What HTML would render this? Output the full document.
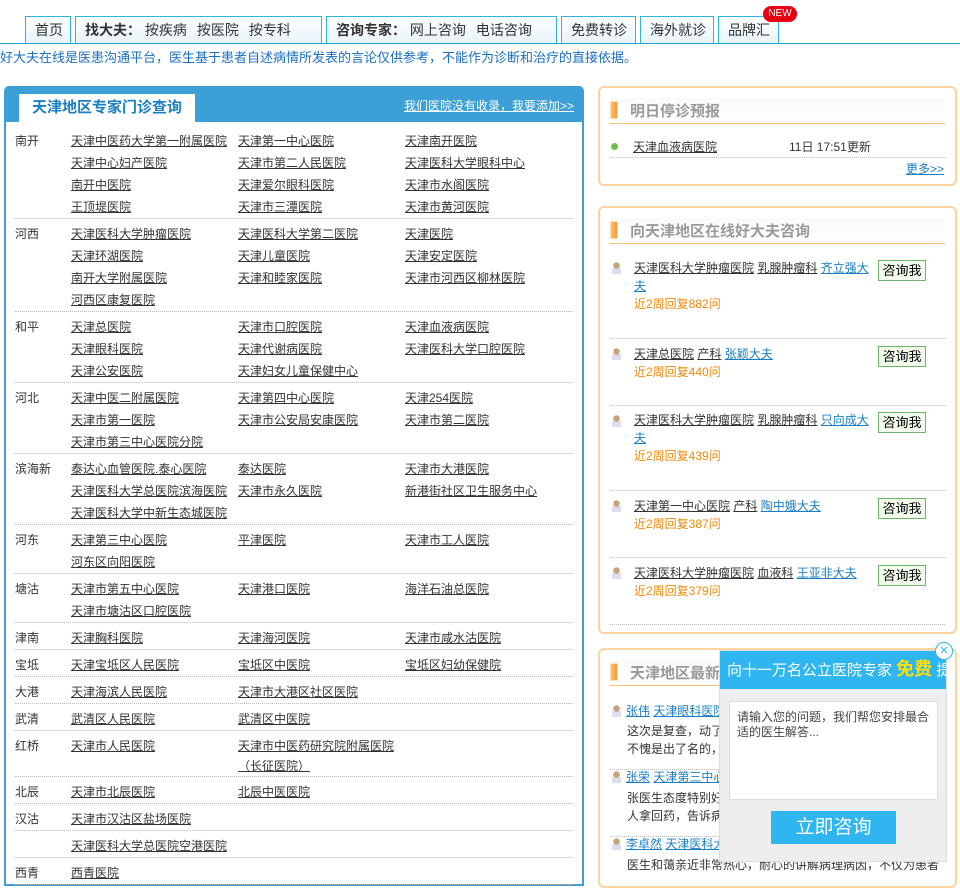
<!DOCTYPE html>
<html><head><meta charset="utf-8"><style>
*{margin:0;padding:0;box-sizing:border-box}
body{width:960px;height:873px;overflow:hidden;background:#fff;font-family:"Liberation Sans","Noto Sans CJK SC",sans-serif;font-size:12px;color:#333;position:relative}
a{color:#333;text-decoration:underline}
.abs{position:absolute}
.nav{position:absolute;top:16px;height:28px;border:1px solid #2fb4e0;border-bottom:none;background:linear-gradient(#fff,#e6f3fb);font-size:14px;line-height:27px;padding:0 9px;color:#333;white-space:nowrap}
.nav b{font-weight:bold}
.nav span{margin-left:10px}
.topline{position:absolute;top:43px;left:0;width:960px;height:1px;background:#2a9fd8}
.notice{position:absolute;top:48px;left:0;color:#1a6fc0;font-size:13px;line-height:20px;white-space:nowrap}
.lp{position:absolute;left:4px;top:86px;width:580px;height:800px;border:2px solid #3c9fd6;border-radius:5px 5px 0 0;background:#fff}
.lph{height:34px;background:#3c9fd6;position:relative}
.tab{position:absolute;left:13px;top:6px;width:176px;height:28px;background:#fff;color:#1a7ec4;font-size:15px;font-weight:bold;line-height:28px;text-align:center;white-space:nowrap}
.add{position:absolute;right:8px;top:9px;color:#fff;font-size:12px;text-decoration:underline}
.list{padding:4px 9px 0 9px}
.g{border-bottom:1px dotted #bbb;padding:4px 0 0;display:flex}
.g .l{width:56px;line-height:22px;color:#333}
.g .c{flex:1;display:grid;grid-template-columns:167px 167px 1fr}
.g .c a{line-height:22px;white-space:nowrap}
.box{position:absolute;left:598px;width:359px;border:2px solid #fdd3a0;border-radius:6px;background:#fff}
.bh{position:absolute;left:10px;top:10px;width:335px;height:26px;border-bottom:1px solid #fdbf6e;background:linear-gradient(#fafafa,#fff)}
.bh i{position:absolute;left:0;top:3px;width:8px;height:18px;background:linear-gradient(90deg,#fcbf77,#f59a2e);border:1px solid #fde0b8}
.bh span{position:absolute;left:20px;top:2px;font-size:15px;font-weight:bold;color:#999}
.ci{position:absolute;left:10px;width:335px;border-bottom:1px dotted #bbb}
.av{position:absolute;left:2px;width:9px;height:12px;background:radial-gradient(circle at 50% 30%,#c9a27b 0 3px,transparent 3.5px),linear-gradient(transparent 6px,#dde 6px);}
.ct{position:absolute;left:24px;width:242px;line-height:18px;word-break:break-all}
.ct a.b{color:#1a7ec4}
.og{color:#f08a0a}
.btn{position:absolute;left:268px;width:48px;height:21px;border:1px solid #6fb36a;background:#f3fcec;font-size:13px;line-height:19px;text-align:center;color:#000}
</style></head><body>
<div class="nav" style="left:25px;width:46px">首页</div>
<div class="nav" style="left:75px;width:247px"><b>找大夫：</b> 按疾病<span>按医院</span><span>按专科</span></div>
<div class="nav" style="left:326px;width:231px"><b>咨询专家：</b> 网上咨询<span>电话咨询</span></div>
<div class="nav" style="left:561px;width:75px">免费转诊</div>
<div class="nav" style="left:640px;width:74px">海外就诊</div>
<div class="nav" style="left:718px;width:61px">品牌汇</div>
<div class="abs" style="left:763px;top:6px;width:34px;height:16px;background:#e60012;border-radius:8px;color:#fff;font-size:10px;line-height:16px;text-align:center">NEW</div>
<div class="topline"></div>
<div class="notice">好大夫在线是医患沟通平台，医生基于患者自述病情所发表的言论仅供参考，不能作为诊断和治疗的直接依据。</div>

<div class="lp">
<div class="lph"><div class="tab">天津地区专家门诊查询</div><a class="add">我们医院没有收录，我要添加&gt;&gt;</a></div>
<div class="list">
<div class="g"><div class="l">南开</div><div class="c"><a>天津中医药大学第一附属医院</a><a>天津第一中心医院</a><a>天津南开医院</a><a>天津中心妇产医院</a><a>天津市第二人民医院</a><a>天津医科大学眼科中心</a><a>南开中医院</a><a>天津爱尔眼科医院</a><a>天津市水阁医院</a><a>王顶堤医院</a><a>天津市三潭医院</a><a>天津市黄河医院</a></div></div>
<div class="g"><div class="l">河西</div><div class="c"><a>天津医科大学肿瘤医院</a><a>天津医科大学第二医院</a><a>天津医院</a><a>天津环湖医院</a><a>天津儿童医院</a><a>天津安定医院</a><a>南开大学附属医院</a><a>天津和睦家医院</a><a>天津市河西区柳林医院</a><a>河西区康复医院</a></div></div>
<div class="g"><div class="l">和平</div><div class="c"><a>天津总医院</a><a>天津市口腔医院</a><a>天津血液病医院</a><a>天津眼科医院</a><a>天津代谢病医院</a><a>天津医科大学口腔医院</a><a>天津公安医院</a><a>天津妇女儿童保健中心</a></div></div>
<div class="g"><div class="l">河北</div><div class="c"><a>天津中医二附属医院</a><a>天津第四中心医院</a><a>天津254医院</a><a>天津市第一医院</a><a>天津市公安局安康医院</a><a>天津市第二医院</a><a>天津市第三中心医院分院</a></div></div>
<div class="g"><div class="l">滨海新</div><div class="c"><a>泰达心血管医院.泰心医院</a><a>泰达医院</a><a>天津市大港医院</a><a>天津医科大学总医院滨海医院</a><a>天津市永久医院</a><a>新港街社区卫生服务中心</a><a>天津医科大学中新生态城医院</a></div></div>
<div class="g"><div class="l">河东</div><div class="c"><a>天津第三中心医院</a><a>平津医院</a><a>天津市工人医院</a><a>河东区向阳医院</a></div></div>
<div class="g"><div class="l">塘沽</div><div class="c"><a>天津市第五中心医院</a><a>天津港口医院</a><a>海洋石油总医院</a><a>天津市塘沽区口腔医院</a></div></div>
<div class="g"><div class="l">津南</div><div class="c"><a>天津胸科医院</a><a>天津海河医院</a><a>天津市咸水沽医院</a></div></div>
<div class="g"><div class="l">宝坻</div><div class="c"><a>天津宝坻区人民医院</a><a>宝坻区中医院</a><a>宝坻区妇幼保健院</a></div></div>
<div class="g"><div class="l">大港</div><div class="c"><a>天津海滨人民医院</a><a>天津市大港区社区医院</a></div></div>
<div class="g"><div class="l">武清</div><div class="c"><a>武清区人民医院</a><a>武清区中医院</a></div></div>
<div class="g"><div class="l">红桥</div><div class="c"><a>天津市人民医院</a><a style="white-space:normal;line-height:20px;padding-top:1px">天津市中医药研究院附属医院（长征医院）</a></div></div>
<div class="g"><div class="l">北辰</div><div class="c"><a>天津市北辰医院</a><a>北辰中医医院</a></div></div>
<div class="g"><div class="l">汉沽</div><div class="c"><a>天津市汉沽区盐场医院</a></div></div>
<div class="g"><div class="l"></div><div class="c"><a>天津医科大学总医院空港医院</a></div></div>
<div class="g"><div class="l">西青</div><div class="c"><a>西青医院</a></div></div>
</div></div>

<div class="box" style="top:86px;height:100px">
<div class="bh"><i></i><span>明日停诊预报</span></div>
<div class="abs" style="left:11px;top:55px;width:7px;height:7px;border-radius:50%;background:#6cc04a"></div>
<a class="abs" style="left:33px;top:50px">天津血液病医院</a>
<div class="abs" style="left:189px;top:50px">11日 17:51更新</div>
<div class="abs" style="left:10px;top:69px;width:335px;border-top:1px dotted #bbb"></div>
<a class="abs" style="left:306px;top:72px;color:#1a7ec4">更多&gt;&gt;</a>
</div>

<div class="box" style="top:206px;height:428px">
<div class="bh"><i></i><span>向天津地区在线好大夫咨询</span></div>
<div class="ci" style="top:48px;height:83px"><div class="av" style="top:6px"></div><div class="ct" style="top:3px"><a>天津医科大学肿瘤医院</a> <a>乳腺肿瘤科</a> <a class="b">齐立强大夫</a><br><span class="og">近2周回复882问</span></div><div class="btn" style="top:4px">咨询我</div></div>
<div class="ci" style="top:131px;height:67px"><div class="av" style="top:9px"></div><div class="ct" style="top:6px"><a>天津总医院</a> <a>产科</a> <a class="b">张颖大夫</a><br><span class="og">近2周回复440问</span></div><div class="btn" style="top:7px">咨询我</div></div>
<div class="ci" style="top:198px;height:85px"><div class="av" style="top:9px"></div><div class="ct" style="top:5px"><a>天津医科大学肿瘤医院</a> <a>乳腺肿瘤科</a> <a class="b">只向成大夫</a><br><span class="og">近2周回复439问</span></div><div class="btn" style="top:6px">咨询我</div></div>
<div class="ci" style="top:283px;height:67px"><div class="av" style="top:9px"></div><div class="ct" style="top:6px"><a>天津第一中心医院</a> <a>产科</a> <a class="b">陶中娥大夫</a><br><span class="og">近2周回复387问</span></div><div class="btn" style="top:7px">咨询我</div></div>
<div class="ci" style="top:350px;height:67px"><div class="av" style="top:9px"></div><div class="ct" style="top:6px"><a>天津医科大学肿瘤医院</a> <a>血液科</a> <a class="b">王亚非大夫</a><br><span class="og">近2周回复379问</span></div><div class="btn" style="top:7px">咨询我</div></div>
</div>

<div class="box" style="top:648px;height:240px">
<div class="bh"><i></i><span>天津地区最新</span></div>
<div class="abs" style="left:12px;top:52px;width:340px;line-height:18px"><span class="av" style="position:absolute;left:0;top:3px"></span><div style="padding-left:14px"><a style="color:#1a7ec4">张伟</a> <a style="color:#1a7ec4">天津眼科医院</a></div><div style="padding-left:15px;margin-top:2px">这次是复查，动了<br>不愧是出了名的，</div></div>
<div class="abs" style="left:10px;top:119px;width:335px;border-top:1px dotted #bbb"></div>
<div class="abs" style="left:12px;top:118px;width:340px;line-height:18px"><span class="av" style="position:absolute;left:0;top:3px"></span><div style="padding-left:14px"><a style="color:#1a7ec4">张荣</a> <a style="color:#1a7ec4">天津第三中心</a></div><div style="padding-left:15px;margin-top:3px">张医生态度特别好<br>人拿回药，告诉病</div></div>
<div class="abs" style="left:10px;top:186px;width:335px;border-top:1px dotted #bbb"></div>
<div class="abs" style="left:12px;top:185px;width:340px;line-height:18px"><span class="av" style="position:absolute;left:0;top:3px"></span><div style="padding-left:14px"><a style="color:#1a7ec4">李卓然</a> <a style="color:#1a7ec4">天津医科大学</a></div><div style="padding-left:15px;margin-top:3px;white-space:nowrap">医生和蔼亲近非常热心，耐心的讲解病理病因，不仅为患者</div></div>
</div>

<div class="abs" style="left:719px;top:650px;width:228px;height:212px;background:#eee;border:1px solid #ddd">
<div style="height:38px;background:#2fb5f0;color:#fff;font-size:15px;line-height:36px;padding-left:7px;white-space:nowrap;overflow:hidden">向十一万名公立医院专家 <b style="color:#ffe000;font-size:18px">免费</b> 提</div>
<div class="abs" style="left:9px;top:50px;width:209px;height:99px;background:#fff;border:1px solid #ddd;padding:8px 7px;line-height:15px;color:#444">请输入您的问题，我们帮您安排最合适的医生解答...</div>
<div class="abs" style="left:51px;top:160px;width:125px;height:33px;background:#2fb5f0;color:#fff;font-size:19px;line-height:33px;text-align:center">立即咨询</div>
</div>
<div class="abs" style="left:935px;top:642px;width:18px;height:18px;border-radius:50%;border:1px solid #2fb5f0;background:#fff;color:#2fb5f0;font-size:15px;line-height:15px;text-align:center">×</div>
</body></html>
